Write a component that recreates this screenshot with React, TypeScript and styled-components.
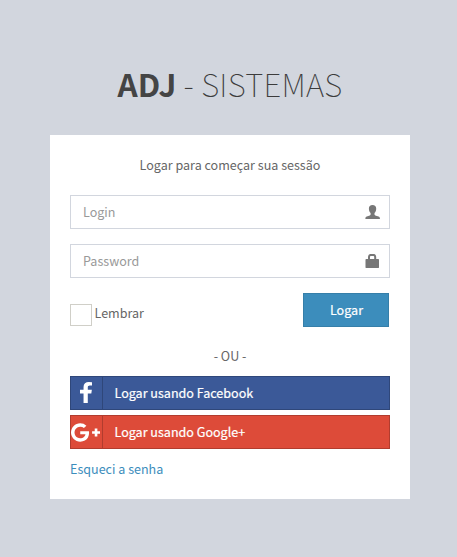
import React from "react";
import styled, { createGlobalStyle } from "styled-components";

const GlobalStyle = createGlobalStyle`
  *, *::before, *::after { box-sizing: border-box; }
  body {
    margin: 0;
    min-height: 557px;
    background: #d2d6de;
    color: #666;
    font: 400 12.55px/20px "Noto Sans CJK SC", "Open Sans", sans-serif;
    overflow: hidden;
  }
`;

const LoginPage = styled.main`
  width: 360px;
  margin: 0 0 0 50px;
  padding-top: 58px;
`;

const Title = styled.h1`
  margin: 0 0 27px;
  height: 50px;
  font-size: 31.5px;
  line-height: 50px;
  font-weight: 100;
  letter-spacing: 0.25px;
  color: #3c3c3c;
  text-align: center;
  white-space: nowrap;

  b { font-weight: 700; letter-spacing: 0; color: #444; }
`;

const Panel = styled.form`
  height: 364px;
  padding: 20px;
  background: #fff;
`;

const Message = styled.p`
  margin: 0 0 20px;
  text-align: center;
`;

const Field = styled.label`
  display: flex;
  align-items: center;
  height: 34px;
  margin-bottom: 15px;
  padding: 0 8px 0 12px;
  border: 1px solid #d2d6de;

  svg { flex: none; }
`;

const Input = styled.input`
  flex: 1;
  min-width: 0;
  height: 32px;
  padding: 0 0 2px;
  border: 0;
  outline: 0;
  background: transparent;
  color: #555;
  font: inherit;

  &::placeholder { color: #999; opacity: 1; }
`;

const Actions = styled.div`
  display: flex;
  justify-content: space-between;
  align-items: flex-start;
  height: 34px;
  padding-right: 1px;
`;

const Remember = styled.label`
  display: flex;
  gap: 2.5px;
  margin-top: 11px;
  line-height: 18px;
`;

const CheckBox = styled.input`
  appearance: none;
  width: 22px;
  height: 22px;
  margin: 0;
  border: 1px solid #d0cfc8;
  background: #fff;
`;

const Submit = styled.button`
  width: 86px;
  height: 34px;
  padding: 0 0 0 1px;
  border: 1px solid #367fa9;
  background: #3c8dbc;
  color: #fff;
  font: inherit;
  -webkit-text-stroke: 0.2px #fff;
`;

const Divider = styled.p`
  margin: 19px 0 10px;
  text-align: center;
`;

const SocialButton = styled.a<{ $fill: string; $edge: string }>`
  display: flex;
  align-items: center;
  height: 34px;
  margin-bottom: 5px;
  border: 1px solid ${(p) => p.$edge};
  background: ${(p) => p.$fill};
  color: #fff;
  -webkit-text-stroke: 0.2px #fff;
`;

const SocialIcon = styled.span<{ $edge: string; $inset: string }>`
  display: flex;
  align-items: center;
  justify-content: center;
  width: 32px;
  height: 32px;
  margin-right: 11.5px;
  padding: ${(p) => p.$inset};
  border-right: 1px solid ${(p) => p.$edge};

  svg { flex: none; }
`;

const Forgot = styled.a`
  display: block;
  margin-top: 10px;
  color: #3c8dbc;
`;

const UserIcon = () => (
  <svg width="16" height="16" viewBox="0 0 16 16" fill="#777">
    <path d="M7.5 1C5.2 1 3.9 2.4 3.9 4.6C3.9 6.5 4.6 8.2 5.6 9.1V10.6C5.6 11.1 5.3 11.3 4.8 11.5L1.8 12.6C.9 13 .4 13.5.4 14.3V15H14.9V14.3C14.9 13.5 14.4 13 13.5 12.6L10.3 11.5C9.8 11.3 9.5 11.1 9.5 10.6V9.1C10.5 8.2 11.2 6.5 11.2 4.6C11.2 2.4 9.8 1 7.5 1Z" />
  </svg>
);

const LockIcon = () => (
  <svg width="16" height="16" viewBox="0 0 16 16" fill="#777">
    <path
      fillRule="evenodd"
      d="M3 6V4C3 2 4.3 1 6 1H8.3C10 1 11.2 2 11.2 4V6H13.3C13.7 6 14 6.3 14 6.7V14.5C14 14.8 13.8 15 13.5 15H1C.7 15 .5 14.8.5 14.5V6.7C.5 6.3.8 6 1.2 6ZM5 6H9.2V4C9.2 3.3 8.8 3 8 3H6.2C5.4 3 5 3.3 5 4Z"
    />
  </svg>
);

const FacebookIcon = () => (
  <svg width="12" height="21" viewBox="479 0 864 1664" preserveAspectRatio="none" fill="#fff">
    <path d="M1343 12v264h-157q-86 0-116 36t-30 108v189h293l-39 296h-254v759h-306v-759h-255v-296h255v-218q0-186 104-288.5t277-102.5q147 0 228 12z" />
  </svg>
);

const GooglePlusIcon = () => (
  <svg width="29" height="19" viewBox="0 -1373 2304 1466" fill="#fff">
    <path
      transform="scale(1 -1)"
      d="M1437 623q0 -208 -87 -370.5t-248 -254t-369 -91.5q-149 0 -285 58t-234 156t-156 234t-58 285t58 285t156 234t234 156t285 58q286 0 491 -192l-199 -191q-117 113 -292 113q-123 0 -227.5 -62t-165.5 -168.5t-61 -232.5t61 -232.5t165.5 -168.5t227.5 -62q83 0 152.5 23t114.5 57.5t78.5 78.5t49 83t21.5 74h-416v252h692q12 -63 12 -122zM2304 745v-210h-209v-209h-210v209h-209v210h209v209h210v-209h209z"
    />
  </svg>
);

export default function App() {
  return (
    <>
      <GlobalStyle />
      <LoginPage>
        <Title><b>ADJ</b> - SISTEMAS</Title>
        <Panel>
          <Message>Logar para começar sua sessão</Message>
          <Field>
            <Input type="text" placeholder="Login" />
            <UserIcon />
          </Field>
          <Field>
            <Input type="password" placeholder="Password" />
            <LockIcon />
          </Field>
          <Actions>
            <Remember><CheckBox type="checkbox" />Lembrar</Remember>
            <Submit type="button">Logar</Submit>
          </Actions>
          <Divider>- OU -</Divider>
          <SocialButton $fill="#3b5998" $edge="#2f477a">
            <SocialIcon $edge="#2f477a" $inset="0 1px 1px 0"><FacebookIcon /></SocialIcon>
            Logar usando Facebook
          </SocialButton>
          <SocialButton $fill="#dd4b39" $edge="#b13c2e">
            <SocialIcon $edge="#b13c2e" $inset="1px 2px 0 0"><GooglePlusIcon /></SocialIcon>
            Logar usando Google+
          </SocialButton>
          <Forgot>Esqueci a senha</Forgot>
        </Panel>
      </LoginPage>
    </>
  );
}
